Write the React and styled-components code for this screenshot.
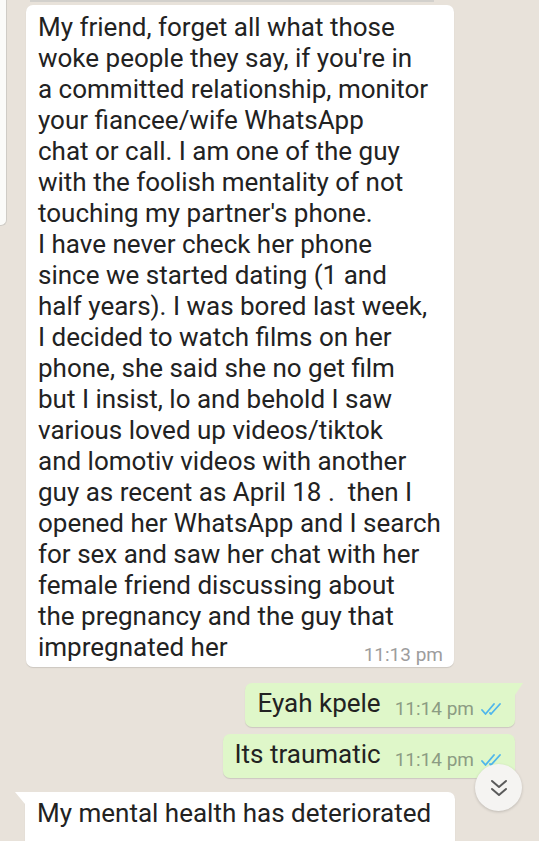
import React from "react";
import styled, { createGlobalStyle } from "styled-components";

const Global = createGlobalStyle`
  html, body { margin: 0; padding: 0; background: #e8e2da; }
  body { font-family: Roboto, "Noto Sans", "Liberation Sans", sans-serif; }
`;

const Screen = styled.div`
  position: relative;
  width: 539px;
  height: 841px;
  overflow: hidden;
  background: #e8e2da;
  display: flex;
  flex-direction: column;
`;

const TopRow = styled.div`
  display: flex;
  align-items: flex-start;
`;

const EdgeStrip = styled.div`
  width: 6px;
  height: 225px;
  background: #fbfbf9;
  border-right: 1px solid #cfccc6;
  border-bottom: 1px solid #cfccc6;
  border-bottom-right-radius: 6px;
  flex: none;
`;

const IncomingCol = styled.div`
  margin-left: 19px;
  display: flex;
  flex-direction: column;
`;

const TopEdge = styled.div`
  width: 404px;
  height: 2px;
  margin-left: 4px;
  margin-bottom: 3px;
  background: #d2d0cc;
`;

const Bubble = styled.div`
  position: relative;
  box-sizing: border-box;
  width: ${(p) => p.$width || "auto"};
  min-height: ${(p) => p.$minH || "0"};
  background: ${(p) => (p.$out ? "#dff7c9" : "#ffffff")};
  border-radius: 7px;
  ${(p) => (p.$tail === "left" ? "border-top-left-radius: 0;" : "")}
  ${(p) => (p.$tail === "right" ? "border-top-right-radius: 0;" : "")}
  box-shadow: 0 1px 1px rgba(0, 0, 0, 0.12);
  padding: ${(p) => p.$pad || "7px 12px 4px 12px"};
  color: #222;
  &::before {
    content: "";
    display: ${(p) => (p.$tail ? "block" : "none")};
    position: absolute;
    top: 0;
    ${(p) => (p.$tail === "left" ? "left: -10px;" : "right: -8px;")}
    width: 0;
    height: 0;
    border-top: 12px solid ${(p) => (p.$out ? "#dff7c9" : "#ffffff")};
    ${(p) =>
      p.$tail === "left"
        ? "border-left: 10px solid transparent;"
        : "border-right: 8px solid transparent;"}
  }
`;

const MsgText = styled.div`
  font-size: 26px;
  line-height: 31px;
  white-space: pre;
  color: #222;
`;

const Meta = styled.div`
  display: flex;
  align-items: center;
  gap: 7px;
  font-size: 19px;
  line-height: 19px;
  color: ${(p) => (p.$out ? "#8c9c83" : "#9d9d9d")};
  margin-bottom: ${(p) => p.$mb || "0"};
  flex: none;
`;

const LastLine = styled.div`
  display: flex;
  align-items: flex-end;
  justify-content: space-between;
`;

const OutRow = styled.div`
  display: flex;
  justify-content: flex-end;
  padding-right: 24px;
  margin-top: ${(p) => p.$mt};
`;

const OutLine = styled.div`
  display: flex;
  align-items: flex-end;
  gap: 14px;
`;

const BottomRow = styled.div`
  margin-top: 14px;
  margin-left: 25px;
`;

const ScrollBtn = styled.div`
  position: absolute;
  left: 475px;
  top: 764px;
  width: 47px;
  height: 47px;
  border-radius: 50%;
  background: #f5f4f2;
  box-shadow: 0 1px 3px rgba(0, 0, 0, 0.18);
  display: flex;
  align-items: center;
  justify-content: center;
`;

const Ticks = () => (
  <svg width="24" height="12" viewBox="0 0 24 12" fill="none">
    <path d="M1 7 L4.5 11 L13 1" stroke="#4fb6ec" strokeWidth="1.8" strokeLinecap="round" strokeLinejoin="round" />
    <path d="M9 10 L10 11 L19 1" stroke="#4fb6ec" strokeWidth="1.8" strokeLinecap="round" strokeLinejoin="round" />
  </svg>
);

const Chevrons = () => (
  <svg width="22" height="20" viewBox="0 0 22 20" fill="none">
    <path d="M4 3 L11 9 L18 3" stroke="#5a5a5a" strokeWidth="2" strokeLinecap="round" strokeLinejoin="round" />
    <path d="M4 11 L11 17 L18 11" stroke="#5a5a5a" strokeWidth="2" strokeLinecap="round" strokeLinejoin="round" />
  </svg>
);

const longMsg = [
  "My friend, forget all what those",
  "woke people they say, if you're in",
  "a committed relationship, monitor",
  "your fiancee/wife WhatsApp",
  "chat or call. I am one of the guy",
  "with the foolish mentality of not",
  "touching my partner's phone.",
  "I have never check her phone",
  "since we started dating (1 and",
  "half years). I was bored last week,",
  "I decided to watch films on her",
  "phone, she said she no get film",
  "but I insist, lo and behold I saw",
  "various loved up videos/tiktok",
  "and lomotiv videos with another",
  "guy as recent as April 18 .  then I",
  "opened her WhatsApp and I search",
  "for sex and saw her chat with her",
  "female friend discussing about",
  "the pregnancy and the guy that",
].join("\n");

export default function App() {
  return (
    <>
      <Global />
      <Screen>
        <TopRow>
          <EdgeStrip />
          <IncomingCol>
            <TopEdge />
            <Bubble $width="428px" $pad="7px 11px 4px 12px">
              <MsgText>{longMsg}</MsgText>
              <LastLine>
                <MsgText>impregnated her</MsgText>
                <Meta $mb="-1px">11:13 pm</Meta>
              </LastLine>
            </Bubble>
          </IncomingCol>
        </TopRow>

        <OutRow $mt="16px">
          <Bubble $out $tail="right" $pad="5px 10px 8px 12px">
            <OutLine>
              <MsgText>Eyah kpele</MsgText>
              <Meta $out $mb="1px">
                11:14 pm <Ticks />
              </Meta>
            </OutLine>
          </Bubble>
        </OutRow>

        <OutRow $mt="7px">
          <Bubble $out $pad="5px 10px 8px 12px">
            <OutLine>
              <MsgText>Its traumatic</MsgText>
              <Meta $out $mb="1px">
                11:14 pm <Ticks />
              </Meta>
            </OutLine>
          </Bubble>
        </OutRow>

        <BottomRow>
          <Bubble $width="430px" $tail="left" $minH="80px" $pad="6px 12px 6px 12px">
            <MsgText>My mental health has deteriorated</MsgText>
          </Bubble>
        </BottomRow>

        <ScrollBtn>
          <Chevrons />
        </ScrollBtn>
      </Screen>
    </>
  );
}
